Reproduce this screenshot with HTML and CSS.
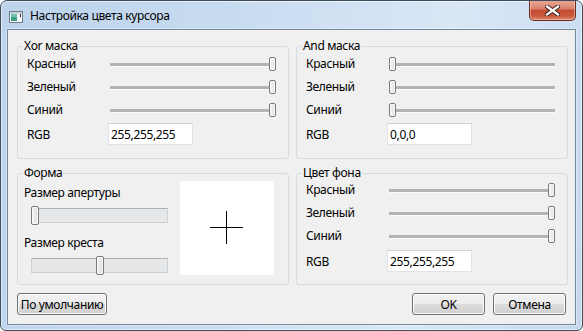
FILE: index.html
```html
<!DOCTYPE html>
<html lang="ru">
<head>
    <meta charset="UTF-8">
    <title>Настройка цвета курсора</title>
    <link rel="stylesheet" href="styles.css">
</head>
<body>
    <div class="window">
        <div class="titlebar">
            <svg class="app-icon" width="14" height="12" viewBox="0 0 14 12">
                <rect x="0.5" y="0.5" width="13" height="11" fill="#f4f6f8" stroke="#6f7b86"/>
                <rect x="1" y="1" width="12" height="2" fill="#c9d3dc"/>
                <rect x="2" y="3" width="6" height="7" fill="#3f9a86"/>
                <rect x="2" y="3" width="6" height="3" fill="#6fc0ad"/>
                <rect x="11" y="3" width="1" height="3" fill="#222"/>
            </svg>
            <span class="title">Настройка цвета курсора</span>
            <button class="close-btn" type="button">
                <svg width="15" height="11" viewBox="0 0 15 11">
                    <path d="M2 1.5 L13 9.5 M13 1.5 L2 9.5" stroke="#3b2420" stroke-width="4.2" stroke-linecap="square"/>
                    <path d="M2 1.5 L13 9.5 M13 1.5 L2 9.5" stroke="#ffffff" stroke-width="2.2" stroke-linecap="square"/>
                </svg>
            </button>
        </div>

        <div class="client">
            <div class="groups">
                <fieldset class="group">
                    <legend>Xor маска</legend>
                    <div class="row"><span class="label">Красный</span><div class="slider"><span class="handle" style="--v:1"></span></div></div>
                    <div class="row"><span class="label">Зеленый</span><div class="slider"><span class="handle" style="--v:1"></span></div></div>
                    <div class="row"><span class="label">Синий</span><div class="slider"><span class="handle" style="--v:1"></span></div></div>
                    <div class="rgb-row"><span class="rgb-label">RGB</span><input class="rgb" type="text" value="255,255,255"></div>
                </fieldset>

                <fieldset class="group">
                    <legend>And маска</legend>
                    <div class="row"><span class="label">Красный</span><div class="slider"><span class="handle" style="--v:0"></span></div></div>
                    <div class="row"><span class="label">Зеленый</span><div class="slider"><span class="handle" style="--v:0"></span></div></div>
                    <div class="row"><span class="label">Синий</span><div class="slider"><span class="handle" style="--v:0"></span></div></div>
                    <div class="rgb-row"><span class="rgb-label">RGB</span><input class="rgb" type="text" value="0,0,0"></div>
                </fieldset>

                <fieldset class="group">
                    <legend>Форма</legend>
                    <div class="shape-body">
                        <div class="shape-controls">
                            <div class="shape-label">Размер апертуры</div>
                            <div class="groove"><span class="knob" style="--v:0"></span></div>
                            <div class="shape-label second">Размер креста</div>
                            <div class="groove"><span class="knob" style="--v:0.5"></span></div>
                        </div>
                        <div class="preview">
                            <svg width="94" height="94" viewBox="0 0 94 94">
                                <path d="M30 46.5 H63 M46.5 30 V63" stroke="#000" stroke-width="1"/>
                            </svg>
                        </div>
                    </div>
                </fieldset>

                <fieldset class="group bg-group">
                    <legend>Цвет фона</legend>
                    <div class="row"><span class="label">Красный</span><div class="slider"><span class="handle" style="--v:1"></span></div></div>
                    <div class="row"><span class="label">Зеленый</span><div class="slider"><span class="handle" style="--v:1"></span></div></div>
                    <div class="row"><span class="label">Синий</span><div class="slider"><span class="handle" style="--v:1"></span></div></div>
                    <div class="rgb-row"><span class="rgb-label">RGB</span><input class="rgb" type="text" value="255,255,255"></div>
                </fieldset>
            </div>

            <div class="buttons">
                <button class="btn btn-default" type="button">По умолчанию</button>
                <button class="btn btn-ok" type="button">OK</button>
                <button class="btn" type="button">Отмена</button>
            </div>
        </div>
    </div>
</body>
</html>
```

FILE: styles.css
```css
* {
    box-sizing: border-box;
}
body {
    margin: 0;
    font-family: "Noto Sans", "Liberation Sans", sans-serif;
    font-size: 12px;
    letter-spacing: -0.35px;
    color: #000;
}
.window {
    width: 583px;
    height: 331px;
    border: 1px solid #3e4c5b;
    border-radius: 7px 7px 6px 6px;
    background: linear-gradient(100deg, #bcd3ec 0%, #c7dbf0 35%, #d9e7f6 72%, #c4d9ef 100%);
    box-shadow: inset 0 0 0 1px rgba(255, 255, 255, 0.55);
    display: flex;
    flex-direction: column;
    padding: 0 6px 5px;
    overflow: hidden;
}
.titlebar {
    height: 28px;
    flex-shrink: 0;
    display: flex;
    align-items: center;
}
.app-icon {
    margin-left: 2px;
    margin-top: 3px;
}
.title {
    margin-left: 7px;
    margin-top: 1px;
}
.close-btn {
    margin-left: auto;
    align-self: flex-start;
    margin-top: -1px;
    width: 47px;
    height: 21px;
    padding: 0;
    border: 1px solid #6e2d22;
    border-top: none;
    border-radius: 0 0 5px 5px;
    background: linear-gradient(#e9aa98 0%, #d9826c 45%, #c44a31 50%, #c95a3f 80%, #e08a6c 100%);
    box-shadow: inset 0 0 0 1px rgba(255, 220, 210, 0.45);
    display: flex;
    align-items: center;
    justify-content: center;
}
.client {
    flex: 1;
    border: 1px solid #75879a;
    box-shadow: 0 0 0 1px rgba(255, 255, 255, 0.35);
    background: #f0f0f0;
    padding: 8px 7px 9px 9px;
    display: flex;
    flex-direction: column;
}
.groups {
    display: grid;
    grid-template-columns: 272px 272px;
    grid-template-rows: 121px 120px;
    gap: 6px 7px;
}
.group {
    margin: 0;
    padding: 0;
    min-width: 0;
    border: 1px solid #d5dce2;
    border-radius: 3px;
}
.group legend {
    margin-left: 5px;
    padding: 0 1px;
    line-height: 16px;
}
.row {
    display: flex;
    align-items: center;
    height: 18px;
    margin: 0 12px 5px 9px;
}
.label {
    width: 83px;
    flex-shrink: 0;
}
.slider {
    position: relative;
    flex: 1;
    height: 14px;
    margin-top: 2px;
}
.slider::before {
    content: "";
    position: absolute;
    left: 0;
    right: 0;
    top: 6px;
    height: 3px;
    background: #b3b3b3;
    border-bottom: 1px solid #fcfcfc;
}
.handle {
    position: absolute;
    top: 0;
    left: calc((100% - 7px) * var(--v));
    width: 7px;
    height: 14px;
    border: 1px solid #7a7a7a;
    border-radius: 2px;
    background: linear-gradient(to right, #f7f7f7, #dedede);
    box-shadow: inset 0 0 0 1px #fafafa;
}
.rgb-row {
    display: flex;
    align-items: center;
    height: 22px;
    margin: 4px 0 0 9px;
}
.rgb-label {
    width: 81px;
}
.rgb {
    width: 85px;
    height: 22px;
    border: 1px solid #e0e2e6;
    border-top-color: #cfd2d6;
    padding: 0 2px;
    font: inherit;
    letter-spacing: inherit;
    color: #000;
    background: #fff;
}
.bg-group .row {
    height: 16px;
    margin-bottom: 7px;
}
.bg-group .rgb-row {
    margin-top: 6px;
}
.shape-body {
    display: flex;
    align-items: flex-start;
    padding-left: 6px;
}
.shape-controls {
    width: 144px;
    margin-right: 12px;
}
.shape-label {
    line-height: 16px;
    margin-top: 4px;
}
.shape-label.second {
    margin-top: 12px;
}
.groove {
    position: relative;
    margin: 7px 0 0 7px;
    width: 137px;
    height: 15px;
    background: #e5e7e8;
    border: 1px solid #cdd0d2;
    border-top-color: #aeb1b4;
}
.knob {
    position: absolute;
    top: -3px;
    left: calc((100% - 6px) * var(--v) - 1px);
    width: 8px;
    height: 19px;
    border: 1px solid #7a7a7a;
    border-radius: 2px;
    background: linear-gradient(to right, #f7f7f7, #dcdcdc);
    box-shadow: inset 0 0 0 1px #fafafa;
}
.preview {
    width: 94px;
    height: 94px;
    background: #fff;
}
.preview svg {
    display: block;
}
.buttons {
    display: flex;
    gap: 8px;
    margin-top: 8px;
    padding-right: 2px;
}
.btn {
    width: 73px;
    height: 22px;
    padding: 0;
    border: 1px solid #707070;
    border-radius: 3px;
    background: linear-gradient(#f2f2f2 0%, #ebebeb 50%, #dddddd 51%, #cfcfcf 100%);
    box-shadow: inset 0 0 0 1px #fbfbfb;
    font: inherit;
    letter-spacing: inherit;
    color: #000;
}
.btn-default {
    width: 90px;
    margin-right: auto;
}
```
